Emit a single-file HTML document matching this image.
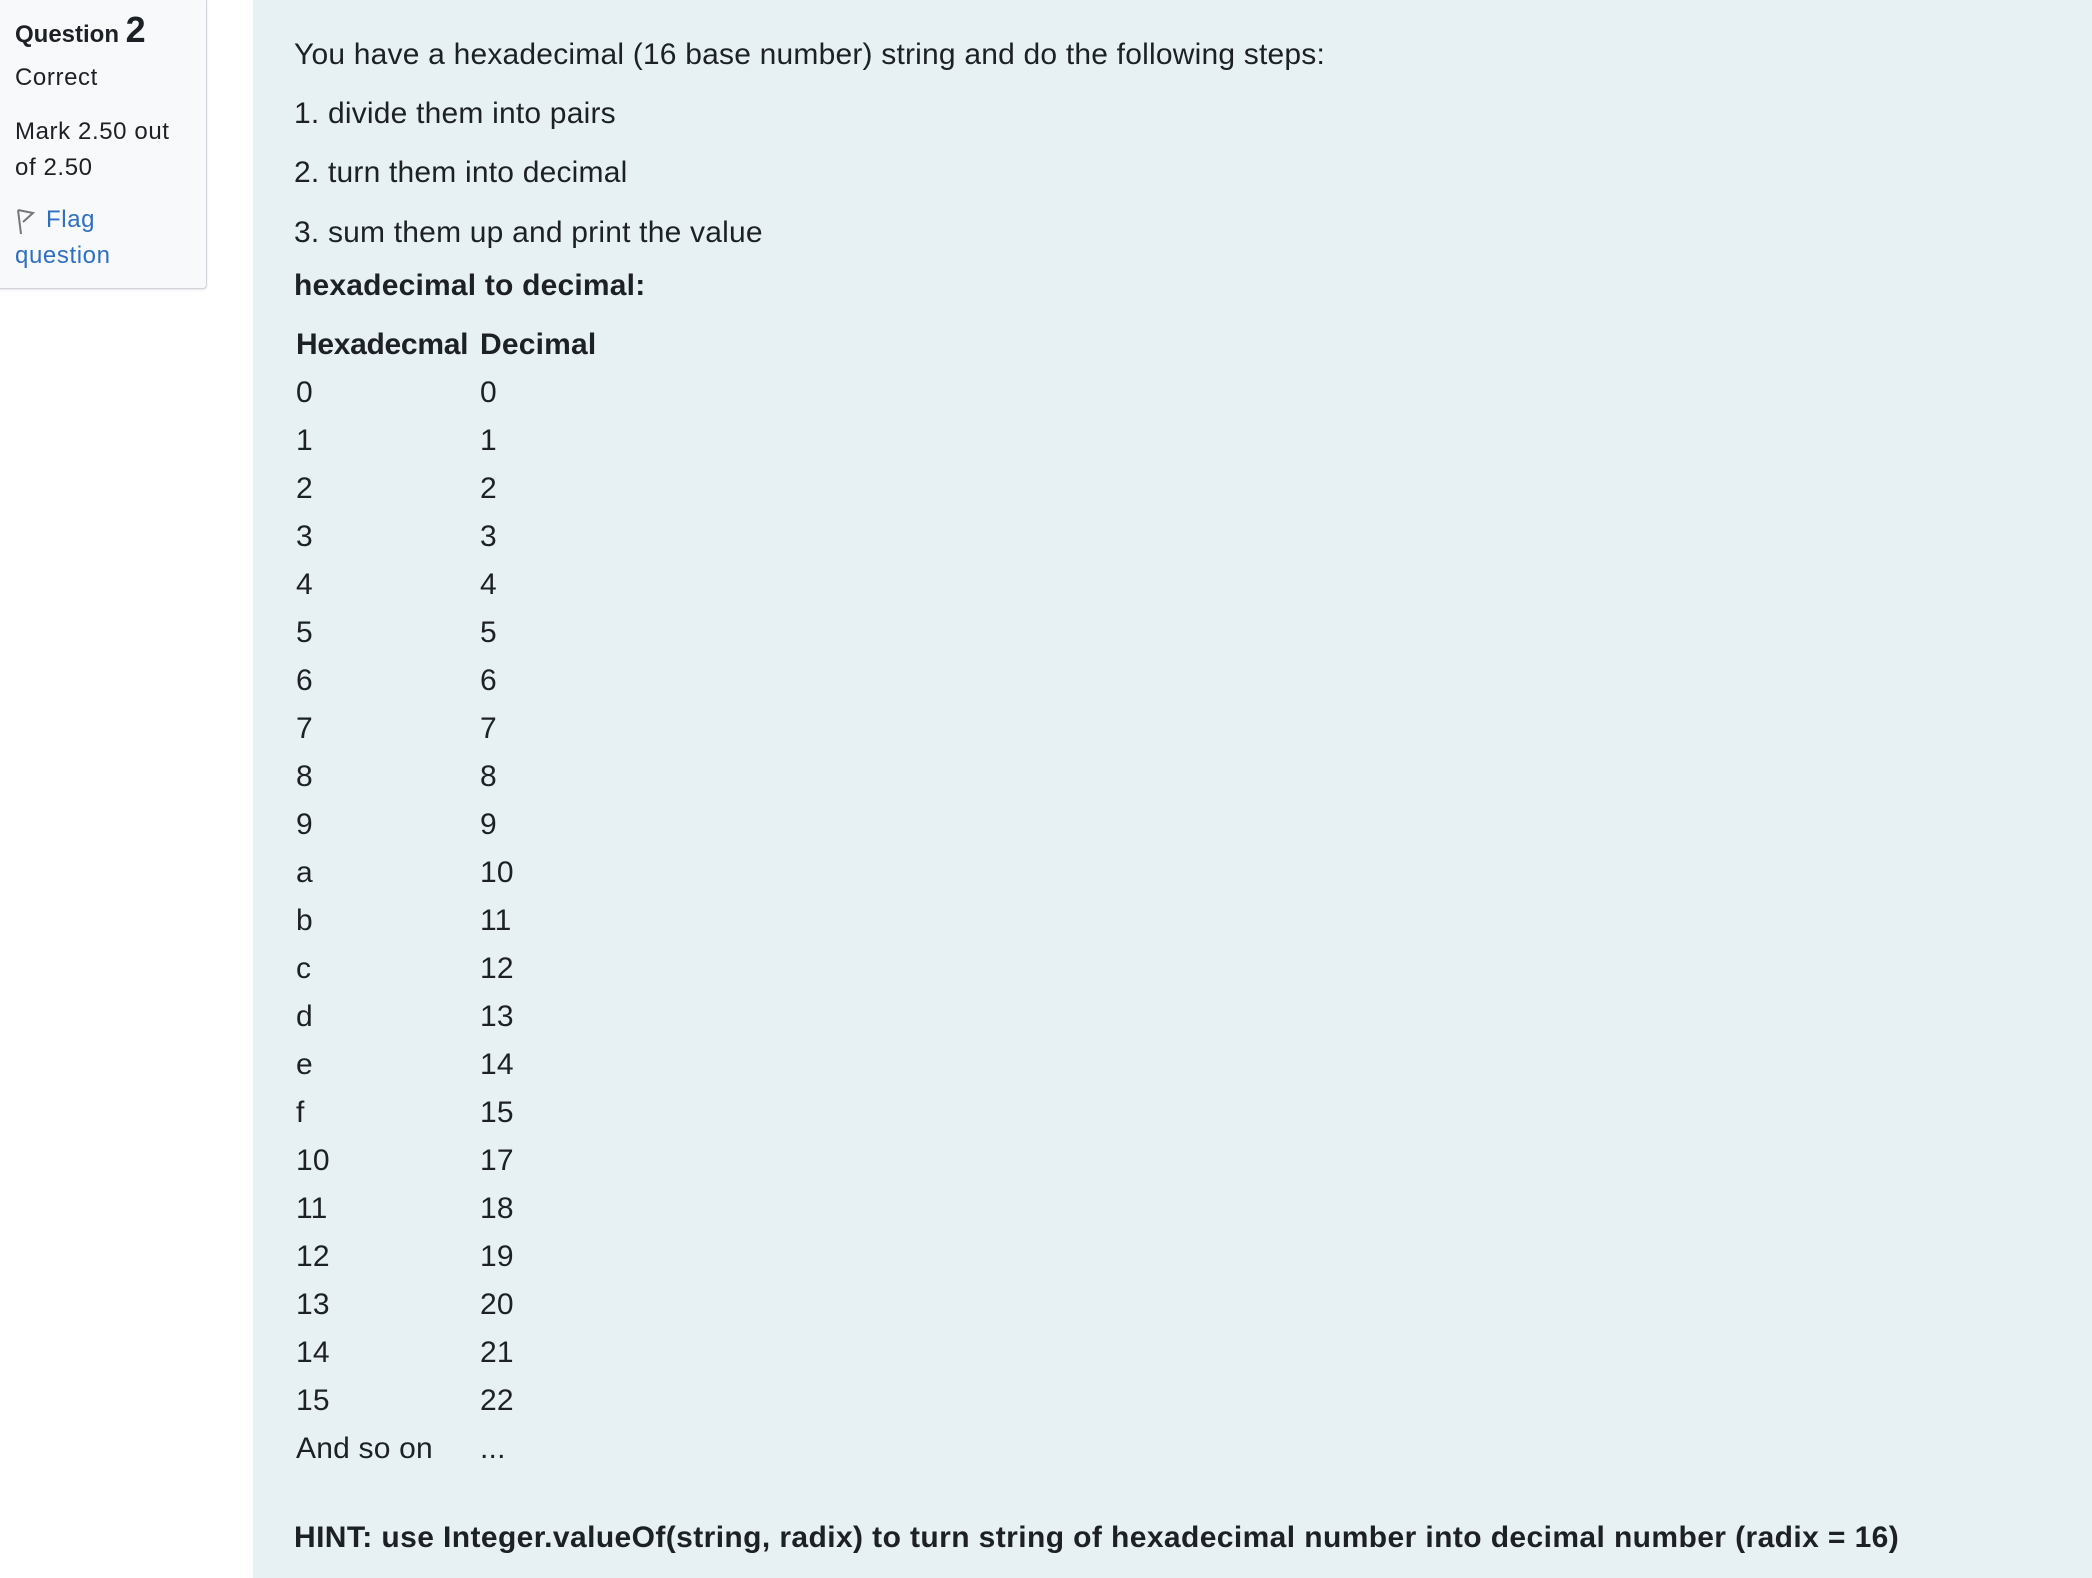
<!DOCTYPE html>
<html><head><meta charset="utf-8"><style>
html,body{margin:0;padding:0;width:2092px;height:1578px;overflow:hidden;background:#fff;font-family:"Liberation Sans",Arial,sans-serif;color:#1d2125}
.side{position:absolute;left:-2px;top:-2px;width:207px;height:289px;background:#f8f9fa;border:1px solid #cfd4da;border-radius:0 0 4px 0;box-shadow:0 1px 2px rgba(0,0,0,.1)}
.main{position:absolute;left:253px;top:0;width:1839px;height:1578px;background:#e7f0f3}
.t{position:absolute;white-space:nowrap;line-height:1}
.s{font-size:24px;letter-spacing:0.6px}
.b{font-weight:bold}
.m{font-size:30px;letter-spacing:0.2px}
.hb{font-size:30px;letter-spacing:0.4px}
a{color:#2e6fbf;text-decoration:none}
</style></head><body>
<div class="side"></div>
<div class="t b" style="left:15px;top:12px;font-size:24px">Question <span style="font-size:36px">2</span></div>
<div class="t s" style="left:15px;top:66px">Correct</div>
<div class="t s" style="left:15px;top:120px">Mark 2.50 out</div>
<div class="t s" style="left:15px;top:156px">of 2.50</div>
<svg style="position:absolute;left:15px;top:208px" width="22" height="28" viewBox="0 0 22 28"><path d="M3 2 L6 26 M3 2 L18 5 L8 14" fill="none" stroke="#777" stroke-width="2"/></svg>
<div class="t s" style="left:46px;top:208px"><a>Flag</a></div>
<div class="t s" style="left:15px;top:244px"><a>question</a></div>
<div class="main"></div>
<div class="t m" style="left:294px;top:40px">You have a hexadecimal (16 base number) string and do the following steps:</div>
<div class="t m" style="left:294px;top:99px">1. divide them into pairs</div>
<div class="t m" style="left:294px;top:158px">2. turn them into decimal</div>
<div class="t m" style="left:294px;top:218px">3. sum them up and print the value</div>
<div class="t m b" style="left:294px;top:271px">hexadecimal to decimal:</div>
<div class="t m b" style="left:296px;top:330px;letter-spacing:-0.3px">Hexadecmal</div>
<div class="t m b" style="left:480px;top:330px">Decimal</div>
<div class="t m" style="left:296px;top:378px">0</div><div class="t m" style="left:480px;top:378px">0</div>
<div class="t m" style="left:296px;top:426px">1</div><div class="t m" style="left:480px;top:426px">1</div>
<div class="t m" style="left:296px;top:474px">2</div><div class="t m" style="left:480px;top:474px">2</div>
<div class="t m" style="left:296px;top:522px">3</div><div class="t m" style="left:480px;top:522px">3</div>
<div class="t m" style="left:296px;top:570px">4</div><div class="t m" style="left:480px;top:570px">4</div>
<div class="t m" style="left:296px;top:618px">5</div><div class="t m" style="left:480px;top:618px">5</div>
<div class="t m" style="left:296px;top:666px">6</div><div class="t m" style="left:480px;top:666px">6</div>
<div class="t m" style="left:296px;top:714px">7</div><div class="t m" style="left:480px;top:714px">7</div>
<div class="t m" style="left:296px;top:762px">8</div><div class="t m" style="left:480px;top:762px">8</div>
<div class="t m" style="left:296px;top:810px">9</div><div class="t m" style="left:480px;top:810px">9</div>
<div class="t m" style="left:296px;top:858px">a</div><div class="t m" style="left:480px;top:858px">10</div>
<div class="t m" style="left:296px;top:906px">b</div><div class="t m" style="left:480px;top:906px">11</div>
<div class="t m" style="left:296px;top:954px">c</div><div class="t m" style="left:480px;top:954px">12</div>
<div class="t m" style="left:296px;top:1002px">d</div><div class="t m" style="left:480px;top:1002px">13</div>
<div class="t m" style="left:296px;top:1050px">e</div><div class="t m" style="left:480px;top:1050px">14</div>
<div class="t m" style="left:296px;top:1098px">f</div><div class="t m" style="left:480px;top:1098px">15</div>
<div class="t m" style="left:296px;top:1146px">10</div><div class="t m" style="left:480px;top:1146px">17</div>
<div class="t m" style="left:296px;top:1194px">11</div><div class="t m" style="left:480px;top:1194px">18</div>
<div class="t m" style="left:296px;top:1242px">12</div><div class="t m" style="left:480px;top:1242px">19</div>
<div class="t m" style="left:296px;top:1290px">13</div><div class="t m" style="left:480px;top:1290px">20</div>
<div class="t m" style="left:296px;top:1338px">14</div><div class="t m" style="left:480px;top:1338px">21</div>
<div class="t m" style="left:296px;top:1386px">15</div><div class="t m" style="left:480px;top:1386px">22</div>
<div class="t m" style="left:296px;top:1434px">And so on</div><div class="t m" style="left:480px;top:1434px">...</div>
<div class="t hb b" style="left:294px;top:1523px">HINT: use Integer.valueOf(string, radix) to turn string of hexadecimal number into decimal number (radix = 16)</div>
</body></html>
